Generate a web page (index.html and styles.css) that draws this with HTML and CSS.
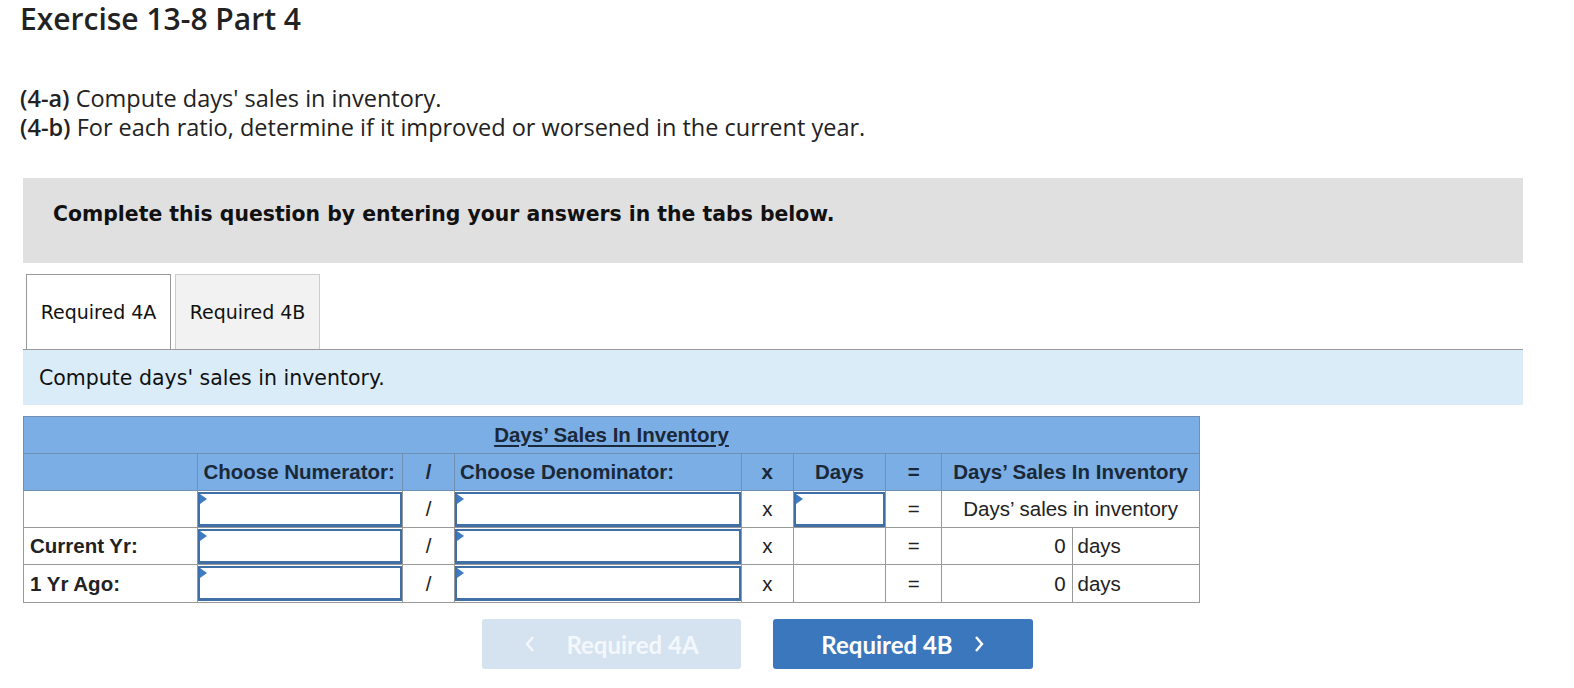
FILE: index.html
```html
<!DOCTYPE html>
<html lang="en">
<head>
  <meta charset="UTF-8">
  <title>Exercise 13-8 Part 4</title>
  <link rel="stylesheet" href="styles.css">
</head>
<body>
  <h1 class="title">Exercise 13-8 Part 4</h1>

  <div class="prompt">
    <p><b>(4-a)</b> Compute days' sales in inventory.</p>
    <p><b>(4-b)</b> For each ratio, determine if it improved or worsened in the current year.</p>
  </div>

  <div class="notice">Complete this question by entering your answers in the tabs below.</div>

  <div class="tabs">
    <div class="tab active">Required 4A</div>
    <div class="tab">Required 4B</div>
  </div>

  <div class="panel-head">Compute days' sales in inventory.</div>

  <table class="ratio">
    <colgroup>
      <col style="width:174px"><col style="width:204px"><col style="width:52px">
      <col style="width:286px"><col style="width:52px"><col style="width:92px">
      <col style="width:56px"><col style="width:130px"><col style="width:127px">
    </colgroup>
    <tr class="head top">
      <th colspan="9"><span class="caption">Days’ Sales In Inventory</span></th>
    </tr>
    <tr class="head">
      <th></th>
      <th class="left">Choose Numerator:</th>
      <th>/</th>
      <th class="left">Choose Denominator:</th>
      <th>x</th>
      <th>Days</th>
      <th>=</th>
      <th colspan="2">Days’ Sales In Inventory</th>
    </tr>
    <tr>
      <td></td>
      <td class="input"><div class="field"></div></td>
      <td>/</td>
      <td class="input"><div class="field"></div></td>
      <td>x</td>
      <td class="input"><div class="field"></div></td>
      <td>=</td>
      <td colspan="2">Days’ sales in inventory</td>
    </tr>
    <tr>
      <td class="label">Current Yr:</td>
      <td class="input"><div class="field"></div></td>
      <td>/</td>
      <td class="input"><div class="field"></div></td>
      <td>x</td>
      <td></td>
      <td>=</td>
      <td class="num">0</td>
      <td class="unit">days</td>
    </tr>
    <tr class="last">
      <td class="label">1 Yr Ago:</td>
      <td class="input"><div class="field"></div></td>
      <td>/</td>
      <td class="input"><div class="field"></div></td>
      <td>x</td>
      <td></td>
      <td>=</td>
      <td class="num">0</td>
      <td class="unit">days</td>
    </tr>
  </table>

  <div class="nav">
    <button class="nav-button prev">
      <svg width="12" height="18" viewBox="0 0 12 18"><polyline points="9,2 3,9 9,16" fill="none" stroke="currentColor" stroke-width="2.4"/></svg>
      <span>Required 4A</span>
    </button>
    <button class="nav-button next">
      <span>Required 4B</span>
      <svg width="12" height="18" viewBox="0 0 12 18"><polyline points="3,2 9,9 3,16" fill="none" stroke="currentColor" stroke-width="2.4"/></svg>
    </button>
  </div>
</body>
</html>
```

FILE: styles.css
```css
* {
  margin: 0;
  padding: 0;
  box-sizing: border-box;
}

body {
  font-family: "Open Sans", Lato, sans-serif;
  color: #1a1a1a;
  background: #fff;
  padding: 0 51px 0 23px;
}

.title {
  font-size: 30px;
  font-weight: 600;
  line-height: 34px;
  padding-top: 2px;
  margin-left: -3px;
  color: #222;
}

.prompt {
  margin-top: 48px;
  margin-left: -3px;
  font-size: 23.5px;
  line-height: 29px;
  color: #222;
}

.prompt b {
  font-weight: 600;
}

.notice {
  margin-top: 36px;
  height: 85px;
  background: #e0e0e0;
  padding: 24px 30px 0;
  font-family: "DejaVu Sans", Verdana, sans-serif;
  font-weight: 700;
  font-size: 20.4px;
  line-height: 24px;
  color: #111;
}

.tabs {
  display: flex;
  gap: 4px;
  margin-top: 11px;
  padding-left: 3px;
  border-bottom: 1px solid #999;
}

.tab {
  width: 145px;
  height: 75px;
  display: flex;
  align-items: center;
  justify-content: center;
  font-family: "DejaVu Sans", Verdana, sans-serif;
  font-size: 19px;
  color: #111;
  background: #f2f2f2;
  border: 1px solid #ccc;
  border-bottom: none;
}

.tab.active {
  background: #fff;
  border-color: #999;
}

.panel-head {
  height: 55px;
  background: #dbecf9;
  padding-left: 16px;
  display: flex;
  align-items: center;
  font-family: "DejaVu Sans", Verdana, sans-serif;
  font-size: 20.5px;
  color: #111;
}

.ratio {
  margin-top: 11px;
  border-collapse: collapse;
  table-layout: fixed;
  width: 1177px;
  font-family: "Liberation Sans", Arial, sans-serif;
  font-size: 20.5px;
  color: #222;
  border: 1px solid #8a8f96;
}

.ratio th,
.ratio td {
  height: 37px;
  border: 1px solid #999;
  text-align: center;
  padding: 0 5px;
  white-space: nowrap;
}

.ratio .last td {
  height: 38px;
}

.ratio .head th {
  background: #7aaee4;
  color: #1b2838;
  font-weight: 700;
  border-color: #6f8fb3;
}

.caption {
  text-decoration: underline;
  text-underline-offset: 3px;
}

.ratio th.left {
  text-align: left;
}

.ratio td.label {
  text-align: left;
  font-weight: 700;
  padding-left: 6px;
}

.ratio td.num {
  text-align: right;
  padding-right: 6px;
}

.ratio td.unit {
  text-align: left;
  padding-left: 5px;
}

.ratio td.input {
  padding: 0;
}

.field {
  position: relative;
  height: 35px;
  border: 2px solid #3f6fa5;
  border-bottom-width: 3px;
  background: #fff;
}

.field::before {
  content: "";
  position: absolute;
  left: 0;
  top: 0;
  border-left: 7px solid #3d7bc4;
  border-top: 5px solid transparent;
  border-bottom: 5px solid transparent;
}

.nav {
  display: flex;
  gap: 32px;
  margin-top: 16px;
  margin-left: 459px;
}

.nav-button {
  width: 259px;
  height: 50px;
  border: none;
  border-radius: 3px;
  display: flex;
  align-items: center;
  justify-content: center;
  font-family: Lato, "Open Sans", sans-serif;
  font-size: 24px;
  font-weight: 700;
  color: #fff;
}

.nav-button.prev {
  gap: 30px;
  background: #d5e2ef;
  color: #f4f7fb;
}

.nav-button.next {
  gap: 20px;
  width: 260px;
  background: #3a77bd;
}
```
